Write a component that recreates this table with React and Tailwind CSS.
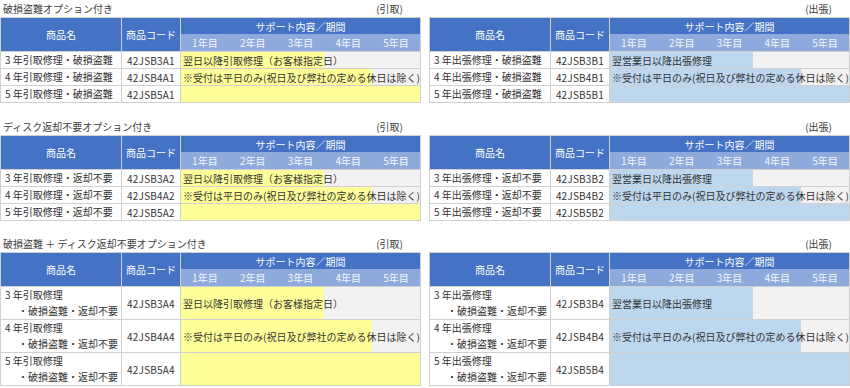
import React from "react";

const FILL = {
  y3: "bg-[linear-gradient(to_right,#ffff99_60%,#f2f2f2_60%)]",
  y4: "bg-[linear-gradient(to_right,#ffff99_80%,#f2f2f2_80%)]",
  y5: "bg-[#ffff99]",
  b3: "bg-[linear-gradient(to_right,#bdd7ee_60%,#f2f2f2_60%)]",
  b4: "bg-[linear-gradient(to_right,#bdd7ee_80%,#f2f2f2_80%)]",
  b5: "bg-[#bdd7ee]",
};

const T1 = "翌日以降引取修理（お客様指定日）";
const T2 = "※受付は平日のみ(祝日及び弊社の定める休日は除く)";
const B1 = "翌営業日以降出張修理";

const sections = [
  {
    title: "破損盗難オプション付き",
    tall: false,
    gap: "",
    left: [
      { name: ["3 年引取修理・破損盗難"], code: "42JSB3A1", text: T1, fill: FILL.y3 },
      { name: ["4 年引取修理・破損盗難"], code: "42JSB4A1", text: T2, fill: FILL.y4 },
      { name: ["5 年引取修理・破損盗難"], code: "42JSB5A1", text: "", fill: FILL.y5 },
    ],
    right: [
      { name: ["3 年出張修理・破損盗難"], code: "42JSB3B1", text: B1, fill: FILL.b3 },
      { name: ["4 年出張修理・破損盗難"], code: "42JSB4B1", text: T2, fill: FILL.b4 },
      { name: ["5 年出張修理・破損盗難"], code: "42JSB5B1", text: "", fill: FILL.b5 },
    ],
  },
  {
    title: "ディスク返却不要オプション付き",
    tall: false,
    gap: "mt-[15px]",
    left: [
      { name: ["3 年引取修理・返却不要"], code: "42JSB3A2", text: T1, fill: FILL.y3 },
      { name: ["4 年引取修理・返却不要"], code: "42JSB4A2", text: T2, fill: FILL.y4 },
      { name: ["5 年引取修理・返却不要"], code: "42JSB5A2", text: "", fill: FILL.y5 },
    ],
    right: [
      { name: ["3 年出張修理・返却不要"], code: "42JSB3B2", text: B1, fill: FILL.b3 },
      { name: ["4 年出張修理・返却不要"], code: "42JSB4B2", text: T2, fill: FILL.b4 },
      { name: ["5 年出張修理・返却不要"], code: "42JSB5B2", text: "", fill: FILL.b5 },
    ],
  },
  {
    title: "破損盗難 ＋ ディスク返却不要オプション付き",
    tall: true,
    gap: "mt-[14px]",
    left: [
      { name: ["3 年引取修理", "・破損盗難・返却不要"], code: "42JSB3A4", text: T1, fill: FILL.y3 },
      { name: ["4 年引取修理", "・破損盗難・返却不要"], code: "42JSB4A4", text: T2, fill: FILL.y4 },
      { name: ["5 年引取修理", "・破損盗難・返却不要"], code: "42JSB5A4", text: "", fill: FILL.y5 },
    ],
    right: [
      { name: ["3 年出張修理", "・破損盗難・返却不要"], code: "42JSB3B4", text: B1, fill: FILL.b3 },
      { name: ["4 年出張修理", "・破損盗難・返却不要"], code: "42JSB4B4", text: T2, fill: FILL.b4 },
      { name: ["5 年出張修理", "・破損盗難・返却不要"], code: "42JSB5B4", text: "", fill: FILL.b5 },
    ],
  },
];

function Table({ rows, tall }) {
  return (
    <div className="w-[421px] border border-[#d0d0d0]">
      <div className="grid grid-cols-[121px_59px_1fr] h-[33px] text-white">
        <div className="bg-[#4472c4] border-r border-[#d0d0d0] flex items-center justify-center">商品名</div>
        <div className="bg-[#4472c4] border-r border-[#d0d0d0] flex items-center justify-center">商品コード</div>
        <div className="flex flex-col">
          <div className="h-[16px] bg-[#4472c4] flex items-center justify-center">サポート内容／期間</div>
          <div className="flex-1 bg-[#8ea9db] grid grid-cols-5 items-center text-center text-[#f4f7fc]">
            <span>1年目</span>
            <span>2年目</span>
            <span>3年目</span>
            <span>4年目</span>
            <span>5年目</span>
          </div>
        </div>
      </div>
      {rows.map((r) => (
        <div
          key={r.code}
          className={`grid grid-cols-[121px_59px_1fr] border-t border-[#d0d0d0] ${tall ? "h-[33px]" : "h-[17px]"}`}
        >
          <div className="border-r border-[#d0d0d0] bg-white flex flex-col justify-center">
            {r.name.map((n, i) => (
              <div key={i} className={`leading-[16px] whitespace-nowrap ${i === 0 ? "pl-[4px]" : "pl-[17px]"}`}>
                {n}
              </div>
            ))}
          </div>
          <div className="border-r border-[#d0d0d0] bg-white flex items-center justify-center tracking-[0.2px]">{r.code}</div>
          <div className={`${r.fill} flex items-center pl-[2px] whitespace-nowrap overflow-hidden`}>{r.text}</div>
        </div>
      ))}
    </div>
  );
}

export default function App() {
  return (
    <div className="w-[850px] h-[388px] bg-white text-[10px] text-[#333333] font-['Noto_Sans_CJK_JP',sans-serif] overflow-hidden">
      {sections.map((s, idx) => (
        <div key={idx} className={`grid grid-cols-[421px_421px] gap-x-[8px] ${s.gap}`}>
          <div>
            <div className="h-[17px] flex items-center justify-between pl-[3px] pr-[18px] text-[#404040]">
              <span>{s.title}</span>
              <span>(引取)</span>
            </div>
            <Table rows={s.left} tall={s.tall} />
          </div>
          <div>
            <div className="h-[17px] flex items-center justify-end pr-[18px] text-[#404040]">
              <span>(出張)</span>
            </div>
            <Table rows={s.right} tall={s.tall} />
          </div>
        </div>
      ))}
    </div>
  );
}
